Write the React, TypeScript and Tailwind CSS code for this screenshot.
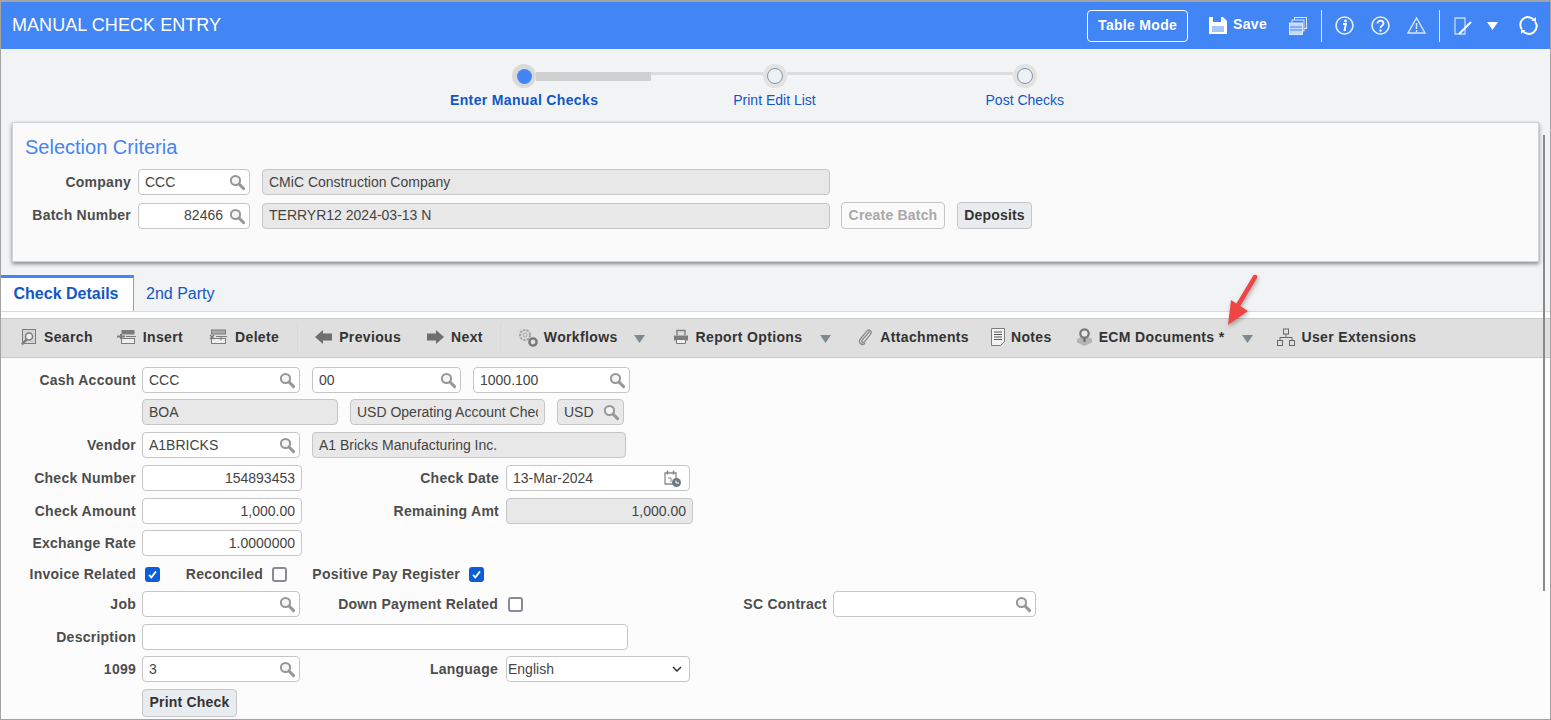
import type { ReactNode } from 'react';

function SearchIcon({ className = '' }: { className?: string }) {
    return (
        <svg className={`w-[18px] h-[18px] shrink-0 ${className}`} viewBox="0 0 18 18" fill="none">
            <circle cx="7.5" cy="7.5" r="4.6" stroke="#979797" strokeWidth="2" fill="#f4f4f4" />
            <path d="M11 11l4.6 4.6" stroke="#979797" strokeWidth="3" strokeLinecap="round" />
        </svg>
    );
}

function Field({ w, value = '', right, off, search = true, ml = 0, children }: { w: string; value?: string; right?: boolean; off?: boolean; search?: boolean; ml?: number; children?: ReactNode }) {
    return (
        <div
            className={`${w} h-[26px] shrink-0 flex items-center rounded-[4px] border border-[#c6c6c6] text-[14px] text-[#444] overflow-hidden ${off ? 'bg-[#e8e8e8]' : 'bg-white'} ${search || children ? 'pl-[6px] pr-[3px]' : 'px-[6px]'}`}
            style={{ marginLeft: ml }}
        >
            <span className={`flex-1 whitespace-nowrap overflow-hidden ${right ? 'text-right' : ''} ${search ? 'pr-[5px]' : ''}`}>{value}</span>
            {search && <SearchIcon />}
            {children}
        </div>
    );
}

function Label({ w = 'w-[135px]', children }: { w?: string; children: ReactNode }) {
    return <div className={`${w} shrink-0 text-right text-[14px] font-bold text-[#4d4d4d] tracking-[0.25px] whitespace-nowrap`}>{children}</div>;
}

function Check({ on, ml }: { on?: boolean; ml: string }) {
    return (
        <div className={`${ml} w-[15px] h-[15px] shrink-0 rounded-[3px] flex items-center justify-center ${on ? 'bg-[#0b5ed7]' : 'bg-white border-2 border-[#8a8a94]'}`}>
            {on && (
                <svg className="w-[13px] h-[13px]" viewBox="0 0 13 13" fill="none">
                    <path d="M3 6.8l2.4 2.6L10 3.4" stroke="#fff" strokeWidth="1.8" />
                </svg>
            )}
        </div>
    );
}

function Caret({ ml }: { ml: string }) {
    return (
        <svg className={`${ml} w-[11px] h-[8px] shrink-0 mt-[4px]`} viewBox="0 0 11 8">
            <path d="M0 0h11L5.5 8z" fill="#7f8a90" />
        </svg>
    );
}

function Tool({ icon, label, ml }: { icon: ReactNode; label: string; ml: string }) {
    return (
        <div className={`${ml} flex items-center shrink-0`}>
            {icon}
            <span className="text-[14px] font-bold text-[#333] tracking-[0.35px] whitespace-nowrap">{label}</span>
        </div>
    );
}

const g = '#7c7c7c';

const toolIcons = {
    search: (
        <svg className="w-[17px] h-[18px] mr-[7px]" viewBox="0 0 17 18" fill="none">
            <rect x="2.5" y="1.5" width="13" height="14" fill="#d5d5d5" stroke={g} />
            <circle cx="9" cy="8.5" r="3.5" stroke={g} strokeWidth="1.5" fill="#eee" />
            <path d="M6.5 11.5L2 16.5" stroke={g} strokeWidth="2.4" />
        </svg>
    ),
    insert: (
        <svg className="w-[20px] h-[16px] mr-[6px]" viewBox="0 0 20 16" fill="none">
            <rect x="4.5" y="1" width="13" height="4.5" fill={g} />
            <rect x="4.5" y="9.5" width="13" height="5" fill="#eee" stroke={g} />
            <path d="M0 7.5h8M4 5v5" stroke={g} strokeWidth="2" />
            <path d="M9 7.5h10" stroke={g} />
        </svg>
    ),
    del: (
        <svg className="w-[19px] h-[16px] mr-[7px]" viewBox="0 0 19 16" fill="none">
            <rect x="2.5" y="1" width="14" height="4" fill="#a9a9a9" stroke={g} />
            <rect x="2.5" y="9.5" width="14" height="5" fill="#eee" stroke={g} />
            <path d="M1 6l4 4M5 6l-4 4" stroke={g} strokeWidth="1.5" />
            <path d="M7 7.5h11M12 7.5v4" stroke={g} />
        </svg>
    ),
    prev: (
        <svg className="w-[17px] h-[14px] mr-[7px]" viewBox="0 0 17 14">
            <path d="M0 7l8-7v3.5h9v7H8V14z" fill="#6f6f6f" />
        </svg>
    ),
    next: (
        <svg className="w-[17px] h-[14px] mr-[7px]" viewBox="0 0 17 14">
            <path d="M17 7L9 0v3.5H0v7h9V14z" fill="#6f6f6f" />
        </svg>
    ),
    workflows: (
        <svg className="w-[20px] h-[19px] mr-[6px]" viewBox="0 0 20 19" fill="none">
            <circle cx="7" cy="7" r="5" stroke="#a5a5a5" strokeWidth="2" strokeDasharray="2.5 1" />
            <circle cx="7" cy="7" r="2" stroke="#a5a5a5" />
            <circle cx="15" cy="14" r="3.6" stroke="#777" strokeWidth="2.4" />
        </svg>
    ),
    report: (
        <svg className="w-[16px] h-[16px] mr-[7px]" viewBox="0 0 16 16" fill="none">
            <path d="M4 6V1.5h8V6" stroke={g} strokeWidth="1.4" />
            <path d="M1 6.5h14v5H1z" fill={g} />
            <path d="M3.5 10.5h9v4h-9z" fill="#eee" stroke={g} />
        </svg>
    ),
    clip: (
        <svg className="w-[15px] h-[18px] mr-[7px]" viewBox="0 0 15 18" fill="none">
            <path d="M11.5 3.5L4.2 12.2c-1.2 1.6.9 3.2 2.2 1.7l6-7.5c2.4-3-1.4-6-3.8-3.1L2.300 11c-2.800 3.600 2 7.400 4.800 4" stroke="#8a8a8a" strokeWidth="1.3" />
        </svg>
    ),
    notes: (
        <svg className="w-[14px] h-[18px] mr-[6px]" viewBox="0 0 14 18" fill="none">
            <path d="M.5.5h13v13l-4 4h-9z" fill="#f2f2f2" stroke={g} />
            <path d="M3 4h8M3 6.500h8M3 9h8M3 11.500h8" stroke="#555" />
        </svg>
    ),
    ecm: (
        <svg className="w-[17px] h-[18px] mr-[6px]" viewBox="0 0 17 18" fill="none">
            <path d="M1 11l7.500-3.500L16 11v3.500L8.500 18 1 14.500z" fill="#b5b5b5" />
            <circle cx="8.500" cy="5.500" r="4.200" stroke="#777" strokeWidth="2.200" fill="#e8e8e8" />
            <path d="M8.500 10v4" stroke="#666" strokeWidth="2" />
        </svg>
    ),
    ext: (
        <svg className="w-[18px] h-[18px] mr-[6px]" viewBox="0 0 18 18" fill="none" stroke="#666">
            <rect x="6.500" y="1" width="5" height="5" />
            <rect x=".5" y="12.500" width="5" height="5" />
            <rect x="12.500" y="12.500" width="5" height="5" />
            <path d="M9 6v3.500M3 12.500v-3h12v3" />
        </svg>
    ),
};

export default function App() {
    return (
        <div className="relative w-full h-screen overflow-hidden flex flex-col bg-[#fcfcfc] border-x border-b border-[#a3a3a3] font-['Liberation_Sans',Arial,sans-serif]">
            {/* Header */}
            <div className="h-[49px] shrink-0 flex items-center bg-[#4285f4] border-t-2 border-[#a3a3a3] text-white">
                <div className="ml-[11px] text-[18px] tracking-[0.06px]">MANUAL CHECK ENTRY</div>
                <div className="ml-auto w-[101px] h-[32px] flex items-center justify-center rounded-[4px] border border-white text-[14px] font-bold tracking-[0.3px]">Table Mode</div>
                <svg className="ml-[21px] -mt-[2px] w-[18px] h-[18px]" viewBox="0 0 18 18">
                    <path d="M0 1h14l4 4v13H0z" fill="#fff" />
                    <rect x="4" y="1" width="8" height="5" fill="#4285f4" />
                    <rect x="3" y="10" width="12" height="6" fill="#a9c6fa" />
                </svg>
                <span className="ml-[6px] -mt-[2px] text-[14px] font-bold tracking-[0.3px]">Save</span>
                <svg className="ml-[22px] w-[18px] h-[18px]" viewBox="0 0 18 18" fill="none" stroke="#dbe7fd">
                    <rect x="5.500" y=".5" width="12" height="11" />
                    <rect x="3" y="3" width="12" height="11" fill="#4285f4" />
                    <rect x=".5" y="6" width="13" height="11.500" fill="#c5d8fb" />
                    <path d="M1 10h12M1 13h12" stroke="#4285f4" />
                </svg>
                <div className="ml-[14px] w-px h-[32px] bg-[#dbe7fd]" />
                <svg className="ml-[13px] w-[19px] h-[19px]" viewBox="0 0 19 19" fill="none">
                    <circle cx="9.500" cy="9.500" r="8.500" stroke="#e6eefe" strokeWidth="1.600" />
                    <circle cx="10.500" cy="5" r="1.400" fill="#fff" />
                    <path d="M8 8h3l-1.500 6h1.500" stroke="#fff" strokeWidth="1.800" />
                </svg>
                <svg className="ml-[17px] w-[19px] h-[19px]" viewBox="0 0 19 19" fill="none">
                    <circle cx="9.500" cy="9.500" r="8.500" stroke="#e6eefe" strokeWidth="1.600" />
                    <path d="M6.500 7.500c0-3.800 6-3.800 6 0 0 2.300-3 2.200-3 4.500" stroke="#fff" strokeWidth="1.800" />
                    <circle cx="9.500" cy="14.500" r="1.200" fill="#fff" />
                </svg>
                <svg className="ml-[17px] w-[19px] h-[17px]" viewBox="0 0 19 17" fill="none">
                    <path d="M9.500 1L18 16H1z" stroke="#d5e3fd" strokeWidth="1.500" />
                    <path d="M9.500 6v6M9.500 13v2" stroke="#d5e3fd" strokeWidth="1.500" />
                </svg>
                <div className="ml-[13px] w-px h-[32px] bg-[#dbe7fd]" />
                <svg className="ml-[14px] w-[18px] h-[18px]" viewBox="0 0 18 18" fill="none">
                    <path d="M1 1h10v16H1z" stroke="#c5d8fb" strokeWidth="1.300" />
                    <path d="M5 17L17 5" stroke="#fff" strokeWidth="2" />
                </svg>
                <svg className="ml-[15px] w-[11px] h-[8px]" viewBox="0 0 11 8">
                    <path d="M0 0h11L5.500 8z" fill="#fff" />
                </svg>
                <svg className="ml-[21px] mr-[12px] w-[19px] h-[19px]" viewBox="0 0 19 19" fill="none">
                    <path d="M3 13.500A7.500 7.500 0 0 1 15 4" stroke="#fff" strokeWidth="2" />
                    <path d="M16 5.500A7.500 7.500 0 0 1 4 15" stroke="#fff" strokeWidth="2" />
                    <path d="M12.500 5h4.500V1z" fill="#fff" />
                    <path d="M6.500 14H2v4z" fill="#fff" />
                </svg>
            </div>

            {/* Stepper and selection criteria */}
            <div className="relative z-10 h-[213px] shrink-0 bg-[#f1f3f5] flex flex-col">
                <div className="mt-[15px] ml-[511px] w-[525px] h-[24px] flex items-center">
                    <div className="w-[24px] h-[24px] shrink-0 rounded-full bg-[#d9d9d9] flex items-center justify-center">
                        <div className="w-[15px] h-[15px] rounded-full bg-[#4285f4]" />
                    </div>
                    <div className="w-[115px] h-[9px] bg-[#d0d0d0]" />
                    <div className="w-[113px] h-[3px] -mt-[6px] bg-[#dcdcdc]" />
                    <div className="w-[24px] h-[24px] shrink-0 rounded-full bg-[#e2e2e2] flex items-center justify-center">
                        <div className="w-[16px] h-[16px] rounded-full bg-[#eef1f4] border border-[#8496a8]" />
                    </div>
                    <div className="w-[227px] h-[3px] -mt-[6px] bg-[#dcdcdc]" />
                    <div className="w-[24px] h-[24px] shrink-0 rounded-full bg-[#e2e2e2] flex items-center justify-center">
                        <div className="w-[16px] h-[16px] rounded-full bg-[#eef1f4] border border-[#8496a8]" />
                    </div>
                </div>
                <div className="ml-[398px] w-[751px] grid grid-cols-3 text-center text-[14px] text-[#1257c9] leading-[20px] mt-[2px]">
                    <div className="font-bold tracking-[0.35px]">Enter Manual Checks</div>
                    <div>Print Edit List</div>
                    <div>Post Checks</div>
                </div>

                <div className="mt-[12px] ml-[11px] w-[1527px] h-[140px] shrink-0 bg-[#fafafa] border border-[#d2d2d2] shadow-[0_2px_4px_rgba(0,0,0,0.45)] flex flex-col">
                    <div className="ml-[12px] mt-[11px] text-[20px] leading-[26px] text-[#4285f4]">Selection Criteria</div>
                    <div className="mt-[9px] flex items-center">
                        <Label w="w-[118px]">Company</Label>
                        <Field w="w-[112px]" ml={7} value="CCC" />
                        <Field w="w-[568px]" ml={12} value="CMiC Construction Company" off search={false} />
                    </div>
                    <div className="mt-[7px] flex items-center">
                        <Label w="w-[118px]">Batch Number</Label>
                        <Field w="w-[112px]" ml={7} value="82466" right />
                        <Field w="w-[568px]" ml={12} value="TERRYR12 2024-03-13 N" off search={false} />
                        <div className="ml-[11px] w-[104px] h-[27px] pb-[1px] flex items-center justify-center rounded-[4px] border border-[#c6c6c6] text-[14px] font-bold tracking-[0.2px] text-[#a8a8a8]">Create Batch</div>
                        <div className="ml-[12px] w-[75px] h-[27px] pb-[1px] flex items-center justify-center rounded-[4px] border border-[#c6c6c6] bg-[#e9ecef] text-[14px] font-bold tracking-[0.2px] text-[#333]">Deposits</div>
                    </div>
                </div>
            </div>

            {/* Tabs */}
            <div className="h-[49px] shrink-0 bg-[#f1f3f5] flex items-start">
                <div className="mt-[13px] w-[133px] h-[36px] pr-[2px] pb-[2px] bg-white border-t-[3px] border-[#4285f4] border-r border-r-[#8ea3b8] flex items-center justify-center text-[16px] font-bold text-[#1257c9]">Check Details</div>
                <div className="mt-[15px] ml-[12px] h-[34px] flex items-center text-[16px] text-[#1257c9]">2nd Party</div>
            </div>
            <div className="h-[7px] shrink-0 bg-white border-t border-[#d5dbe0]" />

            {/* Toolbar */}
            <div className="h-[40px] shrink-0 pb-[2px] bg-[#dfdfdf] border-y border-[#c8c8c8] flex items-center">
                <Tool ml="ml-[19px]" icon={toolIcons.search} label="Search" />
                <Tool ml="ml-[24px]" icon={toolIcons.insert} label="Insert" />
                <Tool ml="ml-[26px]" icon={toolIcons.del} label="Delete" />
                <div className="ml-[18px] w-px h-[30px] bg-[#d5d9dd]" />
                <Tool ml="ml-[17px]" icon={toolIcons.prev} label="Previous" />
                <Tool ml="ml-[26px]" icon={toolIcons.next} label="Next" />
                <div className="ml-[17px] w-px h-[30px] bg-[#d5d9dd]" />
                <Tool ml="ml-[17px]" icon={toolIcons.workflows} label="Workflows" />
                <Caret ml="ml-[16px]" />
                <Tool ml="ml-[28px]" icon={toolIcons.report} label="Report Options" />
                <Caret ml="ml-[18px]" />
                <Tool ml="ml-[27px]" icon={toolIcons.clip} label="Attachments" />
                <Tool ml="ml-[22px]" icon={toolIcons.notes} label="Notes" />
                <Tool ml="ml-[24px]" icon={toolIcons.ecm} label="ECM Documents *" />
                <Caret ml="ml-[18px]" />
                <Tool ml="ml-[24px]" icon={toolIcons.ext} label="User Extensions" />
            </div>

            {/* Form */}
            <div className="flex-1 flex flex-col pt-[9px]">
                <div className="h-[26px] flex items-center">
                    <Label>Cash Account</Label>
                    <Field w="w-[158px]" ml={6} value="CCC" />
                    <Field w="w-[149px]" ml={12} value="00" />
                    <Field w="w-[157px]" ml={12} value="1000.100" />
                </div>
                <div className="mt-[6px] h-[26px] flex items-center">
                    <div className="w-[135px]" />
                    <Field w="w-[196px]" ml={6} value="BOA" off search={false} />
                    <Field w="w-[195px]" ml={12} value="USD Operating Account Chec" off search={false} />
                    <Field w="w-[67px]" ml={12} value="USD" off />
                </div>
                <div className="mt-[7px] h-[26px] flex items-center">
                    <Label>Vendor</Label>
                    <Field w="w-[158px]" ml={6} value="A1BRICKS" />
                    <Field w="w-[314px]" ml={12} value="A1 Bricks Manufacturing Inc." off search={false} />
                </div>
                <div className="mt-[7px] h-[26px] flex items-center">
                    <Label>Check Number</Label>
                    <Field w="w-[160px]" ml={6} value="154893453" right search={false} />
                    <Label w="w-[197px]">Check Date</Label>
                    <Field w="w-[184px]" ml={7} value="13-Mar-2024" search={false}>
                        <svg className="w-[19px] h-[19px] shrink-0 mr-[4px]" viewBox="0 0 19 19" fill="none">
                            <path d="M2 4h11v11H2z" fill="#fff" stroke="#8a8a8a" strokeWidth="1.300" />
                            <path d="M4.500 1.500v4M10.500 1.500v4" stroke="#8a8a8a" strokeWidth="1.600" />
                            <path d="M5 9h3v4" stroke="#8a8a8a" />
                            <circle cx="13.500" cy="13.500" r="4.500" fill="#6e7b85" />
                            <path d="M13 11.500v2.500h3" stroke="#fff" />
                        </svg>
                    </Field>
                </div>
                <div className="mt-[7px] h-[26px] flex items-center">
                    <Label>Check Amount</Label>
                    <Field w="w-[160px]" ml={6} value="1,000.00" right search={false} />
                    <Label w="w-[197px]">Remaining Amt</Label>
                    <Field w="w-[187px]" ml={7} value="1,000.00" right off search={false} />
                </div>
                <div className="mt-[6px] h-[26px] flex items-center">
                    <Label>Exchange Rate</Label>
                    <Field w="w-[160px]" ml={6} value="1.0000000" right search={false} />
                </div>
                <div className="mt-[5px] h-[26px] flex items-center">
                    <Label>Invoice Related</Label>
                    <Check on ml="ml-[9px]" />
                    <Label w="w-[103px]">Reconciled</Label>
                    <Check ml="ml-[9px]" />
                    <Label w="w-[173px]">Positive Pay Register</Label>
                    <Check on ml="ml-[9px]" />
                </div>
                <div className="mt-[4px] h-[26px] flex items-center">
                    <Label>Job</Label>
                    <Field w="w-[158px]" ml={6} />
                    <Label w="w-[198px]">Down Payment Related</Label>
                    <Check ml="ml-[10px]" />
                    <Label w="w-[304px]">SC Contract</Label>
                    <Field w="w-[203px]" ml={6} />
                </div>
                <div className="mt-[7px] h-[26px] flex items-center">
                    <Label>Description</Label>
                    <Field w="w-[486px]" ml={6} search={false} />
                </div>
                <div className="mt-[6px] h-[26px] flex items-center">
                    <Label>1099</Label>
                    <Field w="w-[158px]" ml={6} value="3" />
                    <Label w="w-[198px]">Language</Label>
                    <div className="ml-[8px] w-[184px] h-[26px] shrink-0 flex items-center justify-between pl-[1px] pr-[7px] rounded-[4px] border border-[#c6c6c6] bg-white text-[14px] text-[#444]">
                        <span>English</span>
                        <svg className="w-[10px] h-[6px] shrink-0" viewBox="0 0 10 6" fill="none">
                            <path d="M1 1l4 4 4-4" stroke="#333" strokeWidth="1.500" />
                        </svg>
                    </div>
                </div>
                <div className="mt-[7px] ml-[141px] w-[95px] h-[28px] pb-[1px] flex items-center justify-center rounded-[4px] border border-[#c6c6c6] bg-[#e9ecef] text-[14px] font-bold tracking-[0.2px] text-[#333]">Print Check</div>
            </div>

            {/* Scrollbar line */}
            <div className="absolute z-20 right-[5px] top-[135px] w-[2px] h-[456px] bg-[#8a8a8a]" />

            {/* Red annotation arrow */}
            <svg className="absolute z-20 left-[1222px] top-[272px] w-[40px] h-[58px] drop-shadow-[1px_2px_2px_rgba(0,0,0,0.3)]" viewBox="0 0 40 58" fill="none">
                <path d="M32 5L14 35" stroke="#f04545" strokeWidth="4.500" strokeLinecap="round" />
                <path d="M5 53l3-25 17 11z" fill="#f04545" />
            </svg>
        </div>
    );
}
